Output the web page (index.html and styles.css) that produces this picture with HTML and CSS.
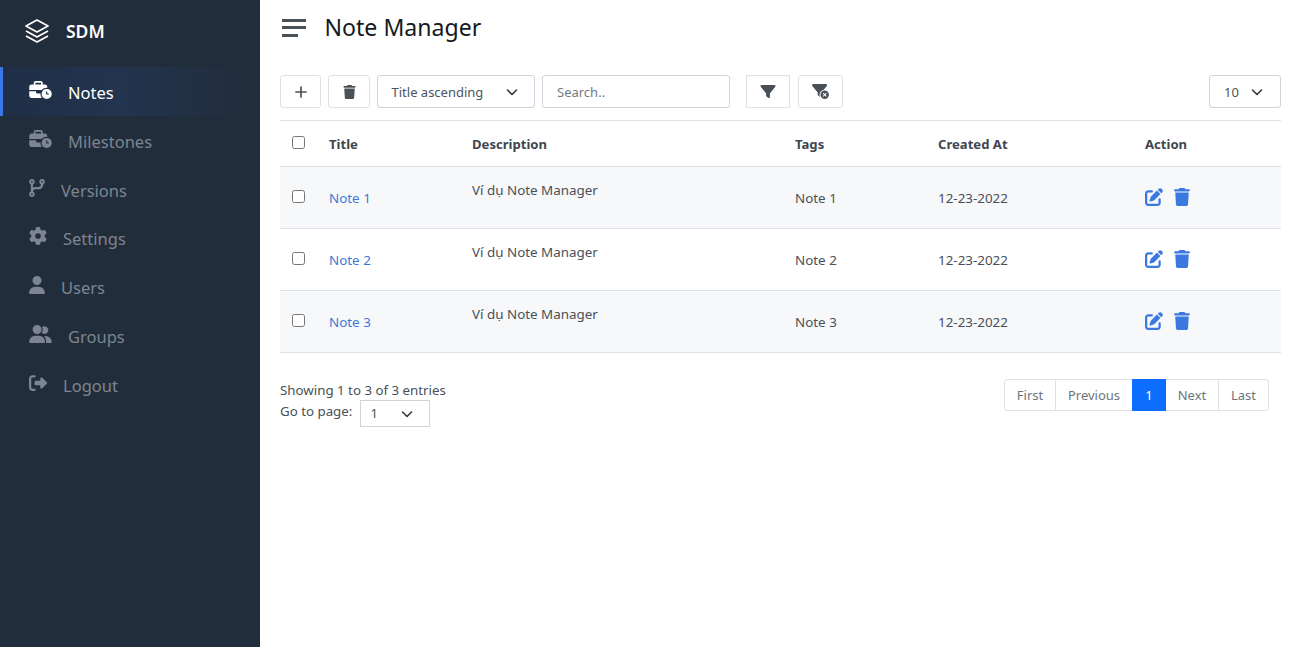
FILE: index.html
```html
<!DOCTYPE html>
<html lang="vi">
<head>
<meta charset="utf-8">
<title>Note Manager</title>
<link rel="stylesheet" href="styles.css">
</head>
<body>
<svg class="sprite" xmlns="http://www.w3.org/2000/svg">
  <symbol id="i-time" viewBox="0 0 640 512"><path d="M184 48H328c4.400 0 8 3.600 8 8V96H176V56c0-4.400 3.600-8 8-8zm-56 8V96H64C28.700 96 0 124.700 0 160v96H192 352h8.200c32.300-39.100 81.100-64 135.800-64c5.400 0 10.700 .2 16 .7V160c0-35.300-28.700-64-64-64H384V56c0-30.900-25.100-56-56-56H184c-30.900 0-56 25.100-56 56zM320 352H224c-17.700 0-32-14.300-32-32V288H0V416c0 35.300 28.700 64 64 64H360.200C335.100 449.600 320 410.500 320 368c0-5.400 .2-10.700 .7-16l-.7 0zm320 16a144 144 0 1 0 -288 0 144 144 0 1 0 288 0zM496 288c8.800 0 16 7.200 16 16v48h32c8.800 0 16 7.200 16 16s-7.200 16-16 16H496c-8.800 0-16-7.200-16-16V304c0-8.800 7.200-16 16-16z"/></symbol>
  <symbol id="i-branch" viewBox="0 0 448 512"><path d="M80 104a24 24 0 1 0 0-48 24 24 0 1 0 0 48zm80-24c0 32.800-19.700 61-48 73.300v87.800c18.800-10.900 40.700-17.100 64-17.100h96c35.300 0 64-28.700 64-64v-6.700C307.700 141 288 112.800 288 80c0-44.200 35.800-80 80-80s80 35.800 80 80c0 32.800-19.700 61-48 73.300V160c0 70.700-57.300 128-128 128H176c-35.300 0-64 28.700-64 64v6.700c28.300 12.300 48 40.500 48 73.300c0 44.200-35.800 80-80 80s-80-35.800-80-80c0-32.800 19.700-61 48-73.300V352 153.300C19.700 141 0 112.800 0 80C0 35.800 35.800 0 80 0s80 35.800 80 80zm232 0a24 24 0 1 0-48 0 24 24 0 1 0 48 0zM80 456a24 24 0 1 0 0-48 24 24 0 1 0 0 48z"/></symbol>
  <symbol id="i-gear" viewBox="0 0 512 512"><path d="M495.900 166.600c3.200 8.700 .5 18.400-6.400 24.600l-43.300 39.400c1.100 8.300 1.700 16.800 1.700 25.400s-.6 17.100-1.700 25.400l43.300 39.400c6.900 6.200 9.600 15.900 6.400 24.600c-4.400 11.900-9.700 23.300-15.800 34.300l-4.700 8.100c-6.600 11-14 21.400-22.100 31.200c-5.900 7.200-15.700 9.600-24.500 6.800l-55.700-17.700c-13.400 10.300-28.200 18.900-44 25.400l-12.500 57.100c-2 9.100-9 16.300-18.200 17.800c-13.800 2.300-28 3.500-42.500 3.500s-28.700-1.200-42.500-3.500c-9.200-1.500-16.200-8.700-18.200-17.800l-12.500-57.100c-15.800-6.500-30.600-15.100-44-25.400L83.100 425.900c-8.800 2.800-18.600 .3-24.500-6.800c-8.100-9.800-15.500-20.200-22.100-31.200l-4.700-8.100c-6.100-11-11.400-22.400-15.800-34.300c-3.200-8.700-.5-18.400 6.400-24.600l43.300-39.400C64.600 273.100 64 264.600 64 256s.6-17.100 1.700-25.400L22.400 191.200c-6.900-6.200-9.600-15.900-6.400-24.600c4.400-11.900 9.700-23.300 15.800-34.300l4.700-8.100c6.600-11 14-21.400 22.100-31.200c5.900-7.200 15.700-9.600 24.500-6.800l55.700 17.700c13.400-10.300 28.200-18.900 44-25.400l12.500-57.100c2-9.100 9-16.300 18.200-17.800C227.300 1.200 241.500 0 256 0s28.700 1.200 42.500 3.500c9.200 1.500 16.200 8.700 18.200 17.800l12.500 57.100c15.800 6.500 30.600 15.100 44 25.400l55.700-17.700c8.800-2.800 18.600-.3 24.500 6.800c8.100 9.800 15.500 20.200 22.100 31.200l4.700 8.100c6.100 11 11.400 22.400 15.800 34.300zM256 336a80 80 0 1 0 0-160 80 80 0 1 0 0 160z"/></symbol>
  <symbol id="i-user" viewBox="0 0 448 512"><path d="M224 256a128 128 0 1 0 0-256 128 128 0 1 0 0 256zm-45.700 48C79.800 304 0 383.800 0 482.300C0 498.700 13.300 512 29.700 512H418.300c16.400 0 29.700-13.300 29.700-29.700C448 383.800 368.200 304 269.700 304H178.300z"/></symbol>
  <symbol id="i-group" viewBox="0 0 640 512"><path d="M96 128a128 128 0 1 1 256 0A128 128 0 1 1 96 128zM0 482.300C0 383.800 79.800 304 178.300 304h91.400C368.200 304 448 383.800 448 482.300c0 16.400-13.300 29.700-29.700 29.700H29.700C13.300 512 0 498.700 0 482.300zM609.300 512H471.400c5.400-9.400 8.600-20.300 8.600-32v-8c0-60.700-27.100-115.200-69.800-151.800c2.400-.1 4.700-.2 7.100-.2h61.400C567.800 320 640 392.200 640 481.300c0 17-13.800 30.700-30.700 30.700zM432 256c-31 0-59-12.600-79.300-32.900C372.400 196.500 384 163.600 384 128c0-26.800-6.600-52.100-18.300-74.300C384.300 40.100 407.200 32 432 32c61.900 0 112 50.100 112 112s-50.100 112-112 112z"/></symbol>
  <symbol id="i-logout" viewBox="0 0 512 512"><path d="M377.900 105.900L500.700 228.700c7.200 7.200 11.300 17.100 11.300 27.300s-4.100 20.100-11.300 27.300L377.900 406.100c-6.400 6.400-15 9.900-24 9.900c-18.700 0-33.900-15.200-33.900-33.900l0-62.100-128 0c-17.700 0-32-14.300-32-32l0-64c0-17.700 14.300-32 32-32l128 0 0-62.100c0-18.700 15.200-33.900 33.900-33.900c9 0 17.600 3.600 24 9.900zM160 96L96 96c-17.700 0-32 14.300-32 32l0 256c0 17.700 14.300 32 32 32l64 0c17.700 0 32 14.300 32 32s-14.300 32-32 32l-64 0c-53 0-96-43-96-96L0 128C0 75 43 32 96 32l64 0c17.700 0 32 14.300 32 32s-14.300 32-32 32z"/></symbol>
  <symbol id="i-trash" viewBox="0 0 448 512"><path d="M135.200 17.700L128 32H32C14.300 32 0 46.300 0 64S14.300 96 32 96H416c17.700 0 32-14.300 32-32s-14.300-32-32-32H320l-7.200-14.300C307.400 6.800 296.300 0 284.200 0H163.800c-12.100 0-23.200 6.800-28.600 17.700zM416 128H32L53.200 467c1.600 25.300 22.600 45 47.900 45H346.900c25.300 0 46.300-19.700 47.900-45L416 128z"/></symbol>
  <symbol id="i-edit" viewBox="0 0 512 512"><path d="M471.600 21.700c-21.900-21.900-57.300-21.900-79.200 0L362.300 51.700l97.900 97.900 30.100-30.100c21.900-21.900 21.900-57.300 0-79.200L471.600 21.700zm-299.200 220c-6.100 6.100-10.800 13.600-13.500 21.900l-29.600 88.800c-2.900 8.600-.6 18.100 5.800 24.600s15.900 8.700 24.600 5.800l88.800-29.600c8.200-2.700 15.700-7.400 21.900-13.500L437.700 172.300 339.700 74.300 172.400 241.700zM96 64C43 64 0 107 0 160V416c0 53 43 96 96 96H352c53 0 96-43 96-96V320c0-17.700-14.300-32-32-32s-32 14.300-32 32v96c0 17.700-14.300 32-32 32H96c-17.700 0-32-14.300-32-32V160c0-17.700 14.300-32 32-32h96c17.700 0 32-14.300 32-32s-14.300-32-32-32H96z"/></symbol>
  <symbol id="i-filter" viewBox="0 0 512 512"><path d="M3.900 54.900C10.500 40.900 24.500 32 40 32H472c15.500 0 29.500 8.900 36.100 22.900s4.500 30.500-5.200 42.500L320 320.900V448c0 12.100-6.800 23.200-17.700 28.600s-23.800 4.300-33.500-3l-64-48c-8.100-6-12.800-15.500-12.800-25.600V320.900L9 97.300C-.7 85.400-2.800 68.800 3.900 54.900z"/></symbol>
  <symbol id="i-clear" viewBox="0 0 576 512"><path d="M3.900 22.900C10.500 8.800 24.600 0 40 0H472c15.500 0 29.500 8.900 36.100 22.900s4.500 30.500-5.200 42.500L396.400 195.600C316.200 212.100 256 283 256 368c0 27.400 6.300 53.400 17.500 76.500c-1.600-.8-3.200-1.800-4.700-2.900l-64-48c-8.100-6-12.800-15.500-12.800-25.600V288.900L9 65.300C-.7 53.400-2.800 36.800 3.900 22.900zM432 224a144 144 0 1 1 0 288 144 144 0 1 1 0-288zm59.300 107.300c6.200-6.200 6.200-16.400 0-22.600s-16.400-6.200-22.600 0L432 345.400l-36.700-36.700c-6.200-6.200-16.400-6.200-22.600 0s-6.200 16.400 0 22.600L409.400 368l-36.700 36.700c-6.200 6.200-6.200 16.400 0 22.600s16.400 6.200 22.600 0L432 390.600l36.700 36.700c6.200 6.200 16.400 6.200 22.600 0s6.200-16.400 0-22.600L454.600 368l36.700-36.700z"/></symbol>
  <symbol id="i-chev" viewBox="0 0 12 8"><path d="M1.500 2 6 6.500 10.500 2"/></symbol>
</svg>
<aside class="sidebar">
  <div class="brand">
    <svg class="brand-icon" viewBox="0 0 24 24"><path d="M12 1 23 7 12 13 1 7Z"/><path d="M1 12 12 18 23 12"/><path d="M1 17 12 23 23 17"/></svg>
    <span>SDM</span>
  </div>
  <nav class="nav">
    <a class="nav-item active"><svg class="ico w23"><use href="#i-time"/></svg><span>Notes</span></a>
    <a class="nav-item"><svg class="ico w23"><use href="#i-time"/></svg><span>Milestones</span></a>
    <a class="nav-item"><svg class="ico w16"><use href="#i-branch"/></svg><span>Versions</span></a>
    <a class="nav-item"><svg class="ico w18"><use href="#i-gear"/></svg><span>Settings</span></a>
    <a class="nav-item"><svg class="ico w16"><use href="#i-user"/></svg><span>Users</span></a>
    <a class="nav-item"><svg class="ico w23"><use href="#i-group"/></svg><span>Groups</span></a>
    <a class="nav-item"><svg class="ico w18"><use href="#i-logout"/></svg><span>Logout</span></a>
  </nav>
</aside>
<main class="main">
  <header class="page-head">
    <div class="burger"><i></i><i></i><i class="short"></i></div>
    <h1>Note Manager</h1>
  </header>
  <div class="toolbar">
    <button class="btn btn-add"><svg class="plus" viewBox="0 0 12 12"><path d="M6 1v10M1 6h10"/></svg></button>
    <button class="btn btn-del"><svg class="tool-ico"><use href="#i-trash"/></svg></button>
    <div class="select sel-sort"><span>Title ascending</span><svg class="chev"><use href="#i-chev"/></svg></div>
    <input class="search" type="text" placeholder="Search..">
    <button class="btn btn-filter"><svg class="tool-ico filter"><use href="#i-filter"/></svg></button>
    <button class="btn btn-clear"><svg class="tool-ico clear"><use href="#i-clear"/></svg></button>
    <div class="select sel-size"><span>10</span><svg class="chev"><use href="#i-chev"/></svg></div>
  </div>
  <table class="grid">
    <colgroup><col class="c1"><col class="c2"><col class="c3"><col class="c4"><col class="c5"><col class="c6"></colgroup>
    <thead>
      <tr><th><input type="checkbox"></th><th>Title</th><th>Description</th><th>Tags</th><th>Created At</th><th>Action</th></tr>
    </thead>
    <tbody>
      <tr class="odd"><td><input type="checkbox"></td><td><a class="link">Note 1</a></td><td class="desc">Ví dụ Note Manager</td><td>Note 1</td><td>12-23-2022</td><td><div class="actions"><svg class="act edit"><use href="#i-edit"/></svg><svg class="act trash"><use href="#i-trash"/></svg></div></td></tr>
      <tr><td><input type="checkbox"></td><td><a class="link">Note 2</a></td><td class="desc">Ví dụ Note Manager</td><td>Note 2</td><td>12-23-2022</td><td><div class="actions"><svg class="act edit"><use href="#i-edit"/></svg><svg class="act trash"><use href="#i-trash"/></svg></div></td></tr>
      <tr class="odd"><td><input type="checkbox"></td><td><a class="link">Note 3</a></td><td class="desc">Ví dụ Note Manager</td><td>Note 3</td><td>12-23-2022</td><td><div class="actions"><svg class="act edit"><use href="#i-edit"/></svg><svg class="act trash"><use href="#i-trash"/></svg></div></td></tr>
    </tbody>
  </table>
  <div class="table-foot">
    <div class="info">
      <div>Showing 1 to 3 of 3 entries</div>
      <div class="goto"><span>Go to page:</span><div class="select sel-page"><span>1</span><svg class="chev"><use href="#i-chev"/></svg></div></div>
    </div>
    <ul class="pager">
      <li class="p-first">First</li><li class="p-prev">Previous</li><li class="p-cur">1</li><li class="p-next">Next</li><li class="p-last">Last</li>
    </ul>
  </div>
</main>
</body>
</html>
```

FILE: styles.css
```css
* { box-sizing: border-box; }
html, body { height: 100%; }
body {
  margin: 0;
  display: flex;
  overflow: hidden;
  background: #fff;
  color: #495057;
  font-family: "Noto Sans", "Open Sans", sans-serif;
  font-size: 13px;
}
.sprite { display: none; }
.sidebar {
  width: 260px;
  flex: none;
  height: 100%;
  background: #222d3b;
  color: #7c8591;
}
.brand {
  height: 67px;
  display: flex;
  align-items: center;
  padding: 0 0 5px 25px;
  color: #fff;
  font-weight: 600;
  font-size: 17.5px;
}
.brand-icon {
  width: 24px;
  height: 24px;
  margin-right: 17px;
  fill: none;
  stroke: #fff;
  stroke-width: 1.7;
  stroke-linejoin: round;
}
.nav { display: flex; flex-direction: column; }
.nav-item {
  height: 48.85px;
  display: flex;
  align-items: center;
  padding-left: 29px;
  font-size: 16.5px;
}
.nav-item span { padding-top: 2px; }
.nav-item.active {
  padding-left: 26px;
  border-left: 3px solid #3b78e7;
  color: #fff;
  background: linear-gradient(90deg, #202e46 0%, #22344f 45%, #222d3b 95%);
}
.ico { fill: #7c8591; margin-right: 16px; margin-top: -3px; height: 18px; flex: none; }
.active .ico { fill: #fff; }
.w23 { width: 23px; }
.w18 { width: 18px; }
.w16 { width: 16px; }
.main { flex: 1; min-width: 0; padding: 0 17px 0 20px; }
.page-head { height: 55px; display: flex; align-items: center; }
.burger { width: 24px; display: flex; flex-direction: column; gap: 4.5px; margin: 0 18.5px 0 2px; }
.burger i { display: block; height: 3px; background: #495057; }
.burger .short { width: 16px; }
h1 { margin: -1px 0 0; font-size: 23.1px; font-weight: 400; color: #16191d; }
.toolbar { display: flex; margin-top: 20px; height: 33px; }
.btn {
  height: 33px;
  padding: 0;
  display: flex;
  align-items: center;
  justify-content: center;
  background: #fff;
  border: 1px solid #dee2e6;
  border-radius: 3px;
}
.btn-add { width: 41px; margin-right: 7px; }
.btn-del { width: 42px; margin-right: 7px; }
.btn-filter { width: 44px; margin-left: 16px; border-radius: 0; }
.btn-clear { width: 45px; margin-left: 8px; }
.tool-ico { height: 14px; width: 13px; fill: #495057; }
.plus { width: 12px; height: 12px; fill: none; stroke: #495057; stroke-width: 1.7; stroke-linecap: round; }
.filter { width: 16px; height: 15px; }
.clear { width: 17px; height: 15px; }
.select {
  height: 33px;
  display: flex;
  align-items: center;
  justify-content: space-between;
  background: #fff;
  border: 1px solid #ced4da;
  border-radius: 3px;
  color: #4d545c;
}
.chev { width: 12px; height: 8px; fill: none; stroke: #343a40; stroke-width: 1.6; stroke-linecap: round; stroke-linejoin: round; }
.sel-sort { width: 158px; margin-right: 7px; padding: 0 16px 0 13.5px; }
.sel-size { width: 72px; margin-left: auto; padding: 0 17px 0 14px; }
.search {
  width: 188px;
  height: 33px;
  padding: 0 14px;
  border: 1px solid #ced4da;
  border-radius: 3px;
  font: inherit;
  outline: none;
}
.search::placeholder { color: #737b84; opacity: 1; }
.grid {
  width: 100%;
  table-layout: fixed;
  border-collapse: collapse;
  margin-top: 12px;
  border-top: 1px solid #dee2e6;
}
.c1 { width: 37px; }
.c2 { width: 143px; }
.c3 { width: 323px; }
.c4 { width: 143px; }
.c5 { width: 207px; }
th, td {
  padding: 0 12px;
  text-align: left;
  vertical-align: middle;
  border-bottom: 1px solid #dee2e6;
}
th { height: 46px; font-weight: 700; font-size: 13.1px; color: #3f464e; }
td { height: 62px; font-size: 13.4px; }
th input, td input { display: block; margin: -2px 0 0; width: 13px; height: 13px; }
.odd td { background: #f7f8fa; }
td.desc { vertical-align: top; padding-top: 14px; }
.link { color: #3c78d8; }
.actions { display: flex; align-items: center; gap: 11px; margin-top: -2px; }
.act { fill: #3b78e0; height: 18px; display: block; }
.edit { width: 18px; }
.trash { width: 16px; }
.table-foot { display: flex; justify-content: space-between; align-items: flex-start; padding-right: 12px; margin-top: 26px; }
.info { line-height: 21px; margin-top: 1px; font-size: 13.3px; }
.goto { display: flex; align-items: flex-start; }
.sel-page { width: 70px; height: 27px; margin: -1px 0 0 8px; border-radius: 0; padding: 0 16px 0 9px; font-size: 13px; }
.pager { display: flex; list-style: none; margin: 0; padding: 0; height: 32px; color: #6c757d; }
.pager li { display: flex; align-items: center; justify-content: center; border: 1px solid #dee2e6; margin-left: -1px; }
.p-first { width: 52px; border-radius: 3px 0 0 3px; margin-left: 0 !important; }
.p-prev { width: 78px; }
.pager .p-cur { width: 34px; background: #0d6efd; border-color: #0d6efd; color: #fff; }
.pager .p-next { width: 53px; margin-left: 0; border-left: 0; }
.p-last { width: 51px; border-radius: 0 3px 3px 0; }
```
